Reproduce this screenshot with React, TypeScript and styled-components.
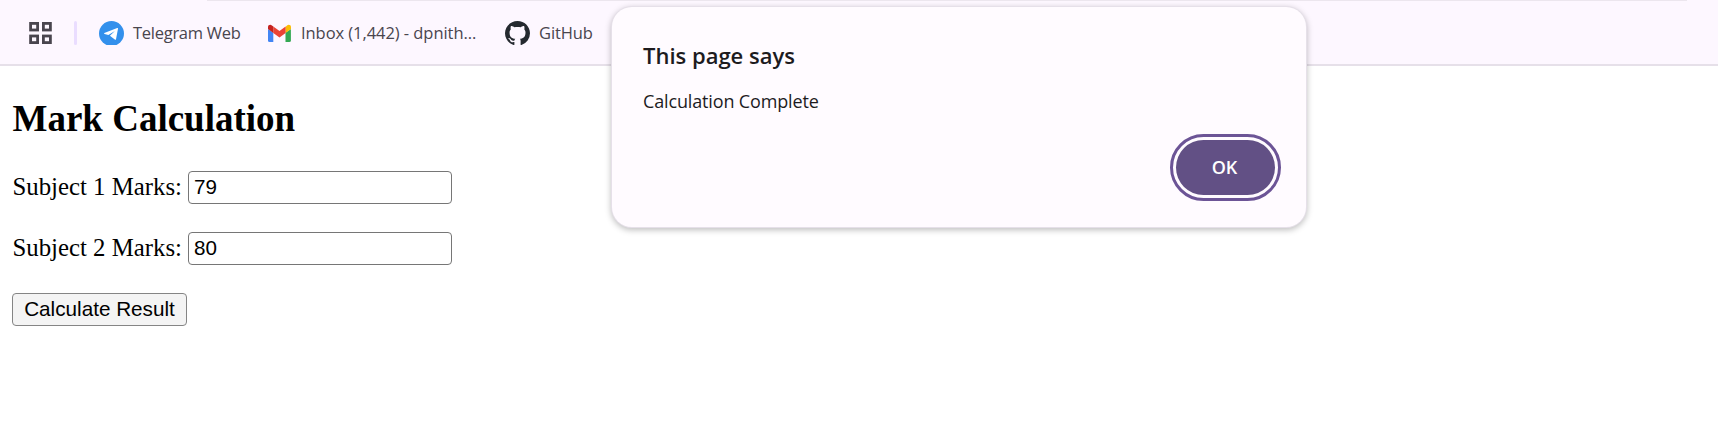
import React from "react";
import styled, { createGlobalStyle } from "styled-components";

const uiFont = `"Open Sans", "Noto Sans", sans-serif`;

const GlobalStyle = createGlobalStyle`
  * { box-sizing: border-box; }
  body { margin: 0; background: #fff; color: #000; font-family: "Liberation Serif", "Times New Roman", serif; overflow: hidden; }
`;

const Screen = styled.div`
  height: 437px;
  overflow: hidden;
`;

const BookmarksBar = styled.div`
  position: relative;
  display: flex;
  align-items: center;
  height: 66px;
  padding-left: 29px;
  border-bottom: 2px solid #e6e0e9;
  background: #fdf7ff;
`;

const ToolbarEdge = styled.div`
  position: absolute;
  top: 0;
  left: 207px;
  right: 31px;
  height: 1px;
  background: #ece6ee;
`;

const AppsIcon = styled.svg`
  width: 23px;
  height: 22px;
  margin-top: 2px;
`;

const Separator = styled.div`
  width: 3px;
  height: 24px;
  margin: 2px 22px 0;
  border-radius: 2px;
  background: #eaddff;
`;

const Bookmark = styled.div<{ $after: number }>`
  display: flex;
  align-items: center;
  gap: 9px;
  margin-right: ${(p) => p.$after}px;
  margin-top: 2px;
`;

const BookmarkIcon = styled.svg`
  display: block;
  width: 25px;
  height: 24px;
`;

const BookmarkLabel = styled.span<{ $width: number; $tracking: number }>`
  width: ${(p) => p.$width}px;
  font: 400 16.5px/24px ${uiFont};
  letter-spacing: ${(p) => p.$tracking}px;
  white-space: nowrap;
  color: #49454e;
`;

const Page = styled.main`
  padding: 32px 12px 0;
`;

const Heading = styled.h2`
  margin: 0 0 31px;
  padding-left: 0.5px;
  font-size: 37px;
  line-height: 42px;
  font-weight: 700;
`;

const Field = styled.label`
  display: flex;
  align-items: center;
  gap: 6px;
  height: 33px;
  margin-bottom: 28px;
  font-size: 24.8px;
  white-space: nowrap;
`;

const FieldText = styled.span`
  width: 170px;
  padding: 0 0 2px 0.5px;
`;

const MarkInput = styled.input`
  width: 264px;
  height: 33px;
  padding: 0 5px 1px;
  border: 1px solid #767676;
  border-radius: 4px;
  outline: none;
  background: #fff;
  color: #000;
  font: 20.6px "Liberation Sans", Arial, sans-serif;
`;

const CalculateButton = styled.button`
  display: block;
  width: 175px;
  height: 33px;
  padding: 0 0 1px;
  border: 1px solid #858585;
  border-radius: 4px;
  background: #f4f4f4;
  color: #000;
  font: 20.7px "Liberation Sans", Arial, sans-serif;
  white-space: nowrap;
`;

const Dialog = styled.section`
  position: absolute;
  top: 7px;
  left: 612px;
  width: 694px;
  height: 220px;
  padding: 32px 31px 0 31px;
  border-radius: 20px;
  background: #fffbff;
  box-shadow: 0 0 0 1px #e6e0e9, 0 2px 6px 1px rgba(0, 0, 0, 0.26);
  font-family: ${uiFont};
  color: #1d1b1e;
`;

const DialogTitle = styled.h1`
  margin: 0;
  font-size: 22px;
  line-height: 32px;
  font-weight: 600;
`;

const DialogMessage = styled.p`
  margin: 17px 0 0;
  font-size: 18px;
  line-height: 26px;
  letter-spacing: -0.15px;
`;

const DialogActions = styled.div`
  display: flex;
  justify-content: flex-end;
  margin-top: 26px;
`;

const OkButton = styled.button`
  width: 99px;
  height: 55px;
  padding: 0 2px 0 0;
  border: 0;
  border-radius: 28px;
  outline: 3px solid #6c5496;
  outline-offset: 3.5px;
  background: #625085;
  color: #fff;
  font: 600 18px/55px ${uiFont};
`;

const TelegramIcon = () => (
  <BookmarkIcon viewBox="0 0 25 24">
    <circle cx="12.5" cy="12.5" r="12.5" fill="#3390ec" />
    <path
      d="M5.3 12.1 18.2 7q1-.3.8.8L17 18.2q-.3 1-1.2.4l-4.9-3.8 5-4.7-6.5 4-3.9-1.2q-.8-.4-.2-.8Z"
      fill="#fff"
    />
  </BookmarkIcon>
);

const GmailIcon = () => (
  <BookmarkIcon viewBox="0 0 25 24">
    <path d="M1 8v11.4Q1 21 2.6 21h3.7V11.8Z" fill="#4285f4" />
    <path d="M18.5 11.8V21h3.8q1.6 0 1.6-1.6V8Z" fill="#34a853" />
    <path d="M18.5 6v6L24 8.1V6.2c0-2.3-2.4-3-4-1.8Z" fill="#fbbc04" />
    <path d="M6.3 12V5.4l6.2 4.7 6.1-4.7V12l-6.1 4.6Z" fill="#ea4335" />
    <path d="M1 6.2v1.9L6.3 12V5.4L4.9 4.4C3.3 3.2 1 3.9 1 6.2Z" fill="#c5221f" />
  </BookmarkIcon>
);

const GitHubIcon = () => (
  <BookmarkIcon viewBox="0 0 16 15.6" preserveAspectRatio="none">
    <path
      d="M8 0C3.58 0 0 3.58 0 8c0 3.54 2.29 6.53 5.47 7.59.4.07.55-.17.55-.38 0-.19-.01-.82-.01-1.49-2.01.37-2.53-.49-2.69-.94-.09-.23-.48-.94-.82-1.13-.28-.15-.68-.52-.01-.53.63-.01 1.08.58 1.23.82.72 1.21 1.87.87 2.33.66.07-.52.28-.87.51-1.07-1.78-.2-3.64-.89-3.64-3.95 0-.87.31-1.59.82-2.15-.08-.2-.36-1.02.08-2.12 0 0 .67-.21 2.2.82.64-.18 1.32-.27 2-.27s1.36.09 2 .27c1.53-1.04 2.2-.82 2.2-.82.44 1.1.16 1.92.08 2.12.51.56.82 1.27.82 2.15 0 3.07-1.87 3.75-3.65 3.95.29.25.54.73.54 1.48 0 1.07-.01 1.93-.01 2.2 0 .21.15.46.55.38A8.01 8.01 0 0 0 16 8c0-4.42-3.58-8-8-8Z"
      fill="#24292f"
    />
  </BookmarkIcon>
);

export default function App() {
  return (
    <Screen>
      <GlobalStyle />
      <BookmarksBar>
        <ToolbarEdge />
        <AppsIcon viewBox="0 0 23 22" fill="none" stroke="#49454e" strokeWidth="2.8">
          <rect x="1.6" y="1.4" width="7" height="6.6" />
          <rect x="14.4" y="1.4" width="7" height="6.6" />
          <rect x="1.6" y="14" width="7" height="6.6" />
          <rect x="14.4" y="14" width="7" height="6.6" />
        </AppsIcon>
        <Separator />
        <Bookmark $after={26}>
          <TelegramIcon />
          <BookmarkLabel $width={108} $tracking={-0.27}>Telegram Web</BookmarkLabel>
        </Bookmark>
        <Bookmark $after={28}>
          <GmailIcon />
          <BookmarkLabel $width={176} $tracking={-0.06}>Inbox (1,442) - dpnith...</BookmarkLabel>
        </Bookmark>
        <Bookmark $after={0}>
          <GitHubIcon />
          <BookmarkLabel $width={56} $tracking={-0.1}>GitHub</BookmarkLabel>
        </Bookmark>
      </BookmarksBar>
      <Page>
        <Heading>Mark Calculation</Heading>
        <Field>
          <FieldText>Subject 1 Marks:</FieldText>
          <MarkInput defaultValue="79" />
        </Field>
        <Field>
          <FieldText>Subject 2 Marks:</FieldText>
          <MarkInput defaultValue="80" />
        </Field>
        <CalculateButton>Calculate Result</CalculateButton>
      </Page>
      <Dialog role="alertdialog">
        <DialogTitle>This page says</DialogTitle>
        <DialogMessage>Calculation Complete</DialogMessage>
        <DialogActions>
          <OkButton>OK</OkButton>
        </DialogActions>
      </Dialog>
    </Screen>
  );
}
